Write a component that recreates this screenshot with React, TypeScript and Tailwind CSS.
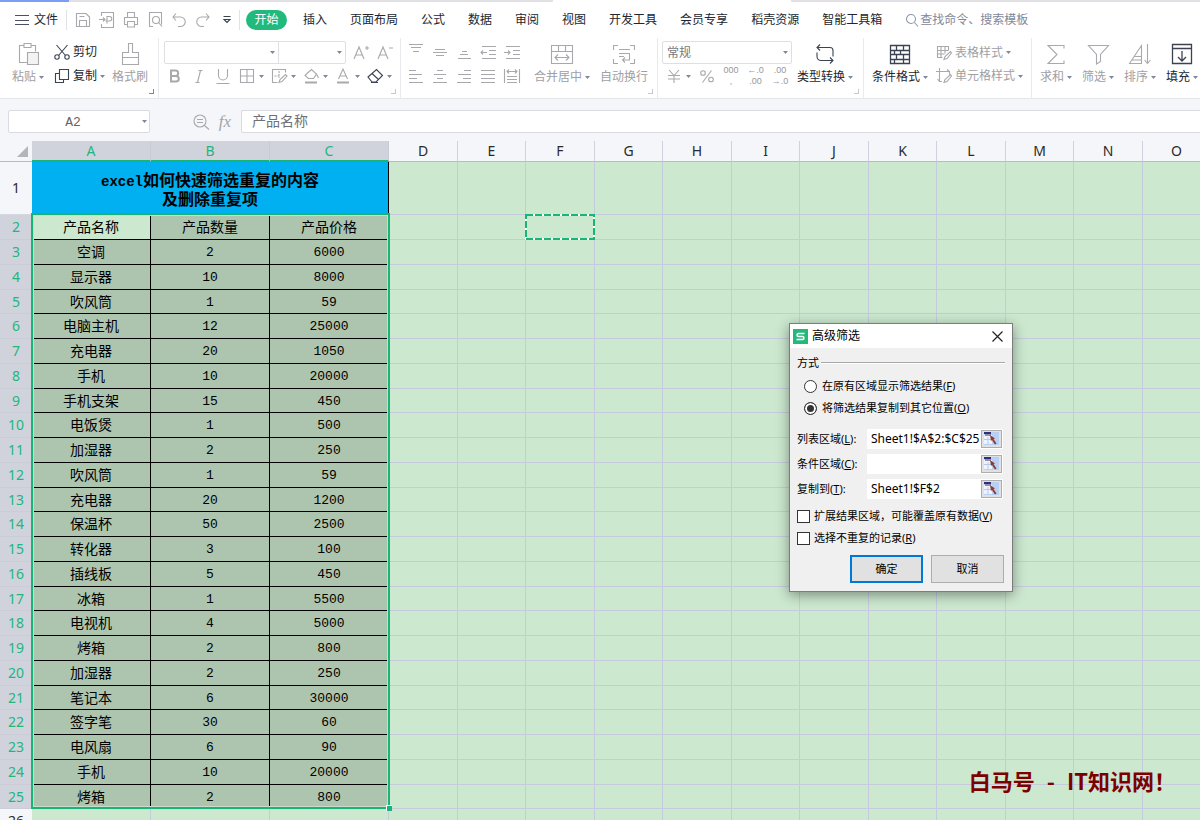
import React, { useState } from 'react'
import clsx from 'clsx'

type Product = [name: string, count: number, price: number]

const PRODUCTS: Product[] = [
  ['空调', 2, 6000],
  ['显示器', 10, 8000],
  ['吹风筒', 1, 59],
  ['电脑主机', 12, 25000],
  ['充电器', 20, 1050],
  ['手机', 10, 20000],
  ['手机支架', 15, 450],
  ['电饭煲', 1, 500],
  ['加湿器', 2, 250],
  ['吹风筒', 1, 59],
  ['充电器', 20, 1200],
  ['保温杯', 50, 2500],
  ['转化器', 3, 100],
  ['插线板', 5, 450],
  ['冰箱', 1, 5500],
  ['电视机', 4, 5000],
  ['烤箱', 2, 800],
  ['加湿器', 2, 250],
  ['笔记本', 6, 30000],
  ['签字笔', 30, 60],
  ['电风扇', 6, 90],
  ['手机', 10, 20000],
  ['烤箱', 2, 800],
]

const MENU = [
  '插入',
  '页面布局',
  '公式',
  '数据',
  '审阅',
  '视图',
  '开发工具',
  '会员专享',
  '稻壳资源',
  '智能工具箱',
]

const DATA_COLS = ['A', 'B', 'C']
const FREE_COLS = ['D', 'E', 'F', 'G', 'H', 'I', 'J', 'K', 'L', 'M', 'N', 'O']

// 图标外壳：统一描边
function Icon({
  size = 18,
  children,
  dark,
}: {
  size?: number
  children: React.ReactNode
  dark?: boolean
}) {
  return (
    <svg
      width={size}
      height={size}
      viewBox={`0 0 ${size} ${size}`}
      fill="none"
      strokeWidth="1.1"
      className={clsx('shrink-0', dark ? 'stroke-[#3b4252]' : 'stroke-[#a9a9ad]')}
      aria-hidden="true"
    >
      {children}
    </svg>
  )
}

function Caret() {
  return (
    <svg width="5" height="3" viewBox="0 0 5 3" className="shrink-0 fill-[#7d879d]" aria-hidden="true">
      <path d="M0 0h5L2.5 3z" />
    </svg>
  )
}

function Divider() {
  return <div className="w-px shrink-0 self-stretch bg-[#e9eaee]" />
}

// 分组右下角的展开标记
function Corner({ dark }: { dark?: boolean }) {
  return (
    <span
      className={clsx(
        'absolute right-1 bottom-1 size-[5px] border-r border-b',
        dark ? 'border-[#7d879d]' : 'border-[#c3c9d6]'
      )}
    />
  )
}

function BigButton({
  label,
  icon,
  caret,
  dark,
  className,
}: {
  label: string
  icon: React.ReactNode
  caret?: boolean
  dark?: boolean
  className: string
}) {
  return (
    <button className={clsx('flex shrink-0 flex-col items-center', className)}>
      <span className="flex h-[26px] items-center">{icon}</span>
      <span
        className={clsx(
          'flex h-5 items-center gap-[3px] whitespace-nowrap',
          dark ? 'text-[#22262e]' : 'text-[#a0a0a4]'
        )}
      >
        {label}
        {caret && <Caret />}
      </span>
    </button>
  )
}

function SmallButton({
  title,
  caret,
  children,
}: {
  title: string
  caret?: boolean
  children: React.ReactNode
}) {
  return (
    <button
      aria-label={title}
      className={clsx('flex h-6 shrink-0 items-center', caret ? 'w-8' : 'w-6')}
    >
      <span className="flex w-6 items-center justify-center">{children}</span>
      {caret && <Caret />}
    </button>
  )
}

function QuickAccess() {
  return (
    <div className="flex">
      <SmallButton title="保存">
        <Icon>
          <path d="M2.500 2.500h9.500l3.500 3.500v9.500h-13zM5.500 15.500v-6h7v6M5.500 5.500h5" />
        </Icon>
      </SmallButton>
      <SmallButton title="输出为PDF">
        <Icon>
          <path d="M3.500 5v-3.500h12v15h-12v-3.500M1 8.500h6M5 6.500l2 2-2 2M9 12.500v-7h2.500a2 2 0 0 1 0 4.500h-4" />
        </Icon>
      </SmallButton>
      <SmallButton title="打印">
        <Icon>
          <path d="M5.500 6v-4.500h7v4.500M5 13.500h-2.500v-7h13v7H13M5.500 10.500h7v5.500h-7z" />
        </Icon>
      </SmallButton>
      <SmallButton title="打印预览">
        <Icon>
          <path d="M7 15.500H3.500v-14h12v12" />
          <circle cx="10" cy="9" r="3.500" />
          <path d="M12.500 11.500l3.500 4" />
        </Icon>
      </SmallButton>
      <SmallButton title="撤销">
        <Icon>
          <path d="M6 2.500L3 6l3 3.500M3 6h7.500a4.500 4.500 0 0 1 0 9.500H8" />
        </Icon>
      </SmallButton>
      <SmallButton title="恢复">
        <Icon>
          <path d="M12 2.500L15 6l-3 3.500M15 6H7.500a4.500 4.500 0 0 0 0 9.500H10" />
        </Icon>
      </SmallButton>
      <SmallButton title="自定义快速访问">
        <Icon size={10} dark>
          <path d="M1.500 1.500h7M2 4.500h6l-3 3z" />
        </Icon>
      </SmallButton>
    </div>
  )
}

function MenuBar() {
  return (
    <nav className="flex h-9 shrink-0 items-center pl-[15px] whitespace-nowrap text-[#22262e]">
      <button className="flex w-[51px] items-center gap-[5px]">
        <svg width="14" height="10" className="stroke-[#4b5160]" aria-hidden="true">
          <path d="M0 .5h14M0 5.500h14M0 9.500h14" />
        </svg>
        文件
      </button>
      <div className="mr-1 h-5 w-px bg-[#e1e2e6]" />
      <QuickAccess />
      <div className="mr-[6px] h-5 w-px bg-[#e1e2e6]" />
      <button className="mr-4 h-5 w-[41px] rounded-full bg-[#22b97d] text-white">开始</button>
      <div className="flex gap-[23px]">
        {MENU.map(item => (
          <button key={item}>{item}</button>
        ))}
      </div>
      <label className="ml-[23px] flex items-center gap-px">
        <Icon size={14}>
          <circle cx="6" cy="6" r="4.500" className="stroke-[#8c96ab]" />
          <path d="M9.500 9.500l3.500 4" className="stroke-[#8c96ab]" />
        </Icon>
        <input
          className="w-28 bg-transparent outline-none placeholder:text-[#7f889b]"
          placeholder="查找命令、搜索模板"
        />
      </label>
    </nav>
  )
}

function ClipboardGroup() {
  return (
    <div className="relative flex shrink-0 pt-[3px] pr-2 pl-[11px]">
      <BigButton
        className="w-[34px]"
        label="粘贴"
        caret
        icon={
          <Icon size={24}>
            <path d="M8 3.500H3.500v17H11M15 3.500h4.500v6M8 1.500h7v4H8z" />
            <path d="M11.500 10.500h11v12h-11z" className="fill-[#f3f3f4]" />
          </Icon>
        }
      />
      <div className="ml-[9px] flex w-14 flex-col text-[#22262e]">
        <button className="flex h-[22px] items-center gap-[3px]">
          <Icon size={16} dark>
            <path d="M2.500 1l9 10.500M13.500 1l-9 10.500" />
            <circle cx="3" cy="13" r="2.200" />
            <circle cx="13" cy="13" r="2.200" />
          </Icon>
          剪切
        </button>
        <button className="mt-px flex h-6 items-center gap-[3px]">
          <Icon size={16} dark>
            <path d="M5.500 1.500h9v10h-9zM5.500 5.500h-4v9h8v-3" />
          </Icon>
          复制
          <Caret />
        </button>
      </div>
      <BigButton
        className="w-10"
        label="格式刷"
        icon={
          <Icon size={24}>
            <path d="M10.500 1.500h4v9h6v12h-16v-12h6zM4.500 15.500h16" />
          </Icon>
        }
      />
      <Corner dark />
    </div>
  )
}

function FontGroup() {
  return (
    <div className="relative flex shrink-0 flex-col pt-[3px] pr-[3px] pl-1">
      <div className="flex h-[23px] items-center pl-px">
        <div className="mr-[3px] flex h-[23px] w-[182px] rounded-xs border border-[#dedfe3]">
          <div className="relative flex-1 border-r border-[#dedfe3]">
            <select aria-label="字体" className="size-full appearance-none outline-none" defaultValue="">
              <option value="" />
              <option value="simsun">宋体</option>
            </select>
            <span className="pointer-events-none absolute top-[9px] right-[3px] leading-[0]">
              <Caret />
            </span>
          </div>
          <div className="relative w-[66px]">
            <select aria-label="字号" className="size-full appearance-none outline-none" defaultValue="">
              <option value="" />
              <option value="11">11</option>
            </select>
            <span className="pointer-events-none absolute top-[9px] right-[3px] leading-[0]">
              <Caret />
            </span>
          </div>
        </div>
        <SmallButton title="增大字号">
          <Icon>
            <path d="M2 15L7 3l5 12M3.800 11h6.400M13 4h4M15 2v4" />
          </Icon>
        </SmallButton>
        <SmallButton title="减小字号">
          <Icon>
            <path d="M2 15L7 3l5 12M3.800 11h6.400M13 4h4" />
          </Icon>
        </SmallButton>
      </div>
      <div className="flex">
        <SmallButton title="加粗">
          <Icon>
            <path
              d="M5 3.500h4.500a2.700 2.700 0 0 1 0 5.400H5zM5 8.900h5a2.800 2.800 0 0 1 0 5.600H5z"
              strokeWidth="2"
            />
          </Icon>
        </SmallButton>
        <SmallButton title="倾斜">
          <Icon>
            <path d="M8.500 3.500h4M5.500 15.500h4M10.500 3.500l-3 12" />
          </Icon>
        </SmallButton>
        <SmallButton title="下划线">
          <Icon>
            <path d="M4.500 2v6.500a4.500 4.500 0 0 0 9 0V2M2.500 16.500h13" />
          </Icon>
        </SmallButton>
        <SmallButton title="边框" caret>
          <Icon>
            <path d="M2.500 2.500h13v13h-13zM9 2.500v13M2.500 9h13" />
          </Icon>
        </SmallButton>
        <SmallButton title="绘制边框" caret>
          <Icon>
            <path d="M15.500 5.500v-3h-13v13h5" />
            <path d="M9 4v7M4.500 9h6" strokeDasharray="2 1" />
            <path d="M9 15.500l1-3 5.500-5 1.500 1.500-5 5.500z" />
          </Icon>
        </SmallButton>
        <SmallButton title="填充颜色" caret>
          <Icon>
            <path d="M5 6.500l4.500-4 5 4.500-3 4.500H6.500L3 8.500zM14.500 7l2 4" />
            <path d="M3 15.500h12" strokeWidth="2" />
          </Icon>
        </SmallButton>
        <SmallButton title="字体颜色" caret>
          <Icon>
            <path d="M4.500 12L9 2l4.500 10M6 9h6" />
            <path d="M3 15.500h12" strokeWidth="2" />
          </Icon>
        </SmallButton>
        <SmallButton title="清除" caret>
          <Icon dark>
            <path d="M2 10l8.500-7.500 6 6-6.500 6.500H6zM6 6.500l6.500 6M5 15.500h7" />
          </Icon>
        </SmallButton>
      </div>
      <Corner />
    </div>
  )
}

const ALIGN_TOP: [string, string][] = [
  ['顶端对齐', 'M2 1.500h14M4 4.500h10M6 8.500h6'],
  ['垂直居中', 'M4 6.500h10M2 9.500h14M5 12.500h8'],
  ['底端对齐', 'M7 8.500h5M5 11.500h8M3 15.500h13'],
  ['减少缩进', 'M3 3.500h14M10 7.500h7M10 11.500h7M3 15.500h14M2 9.500h6M4 7.500l-2 2 2 2'],
  ['增加缩进', 'M3 3.500h14M10 7.500h7M10 11.500h7M3 15.500h14M1 9.500h6M5 7.500l2 2-2 2'],
]

const ALIGN_BOTTOM: [string, string][] = [
  ['左对齐', 'M2 3.500h7M2 7.500h13M2 11.500h8M2 15.500h14'],
  ['居中对齐', 'M6 3.500h6M3 7.500h12M6 11.500h6M2 15.500h14'],
  ['右对齐', 'M9 3.500h7M3 7.500h13M8 11.500h8M2 15.500h14'],
  ['两端对齐', 'M2 3.500h14M2 7.500h14M2 11.500h14M2 15.500h14'],
  ['分散对齐', 'M1.500 2v14M16.500 2v14M4 4.500h10M6 2.500l-2 2 2 2M12 2.500l2 2-2 2M4 9.500h10M4 12.500h10M4 15.500h10'],
]

function AlignGroup() {
  return (
    <div className="relative flex shrink-0 pt-[3px] pr-[3px] pl-[3px]">
      <div className="-mt-px mr-[6px] flex flex-col">
        {[ALIGN_TOP, ALIGN_BOTTOM].map((row, i) => (
          <div key={i} className="flex">
            {row.map(([title, d]) => (
              <SmallButton key={title} title={title}>
                <Icon>
                  <path d={d} />
                </Icon>
              </SmallButton>
            ))}
          </div>
        ))}
      </div>
      <BigButton
        className="w-16"
        label="合并居中"
        caret
        icon={
          <Icon size={24}>
            <path d="M1.500 3.500h21v18h-21zM1.500 9.500h21M8.500 3.500v6M15.500 3.500v6M5 15.500h14M8 12.500l-3 3 3 3M16 12.500l3 3-3 3" />
          </Icon>
        }
      />
      <BigButton
        className="w-[60px]"
        label="自动换行"
        icon={
          <Icon size={24}>
            <path d="M6 3.500H1.500V8M18 3.500h4.500V8M1.500 17v4.500H6M22.500 17v4.500H18M7 7.500h11M7 11.500h11M7 14.500h5M17.500 11.500v6.500h-7M13 15.500l-2.500 2.500 2.500 2.500" />
          </Icon>
        }
      />
      <Corner />
    </div>
  )
}

// 数字格式类图标里的小字
function Glyph({ top, bottom }: { top: string; bottom: string }) {
  return (
    <span className="flex flex-col text-center font-['Liberation_Sans','Noto_Sans_CJK_SC',sans-serif] text-[9px] leading-[11px] text-[#97979b]">
      <span>{top}</span>
      <span>{bottom}</span>
    </span>
  )
}

function NumberGroup() {
  return (
    <div className="relative flex shrink-0 pt-[3px] pr-2 pl-1">
      <div className="w-[130px]">
        <div className="relative h-[23px] rounded-xs border border-[#dedfe3]">
          <select
            aria-label="数字格式"
            className="size-full appearance-none pl-1 text-[#77777b] outline-none"
            defaultValue="常规"
          >
            <option>常规</option>
            <option>数值</option>
          </select>
          <span className="pointer-events-none absolute top-[9px] right-[3px] leading-[0]">
            <Caret />
          </span>
        </div>
        <div className="flex justify-between">
          <SmallButton title="货币" caret>
            <Icon>
              <path d="M4 3l5 5.500L14 3M9 8.500V16M3 8.500h12M3 12h12" />
            </Icon>
          </SmallButton>
          <SmallButton title="百分比">
            <Icon>
              <circle cx="5" cy="6" r="2.300" />
              <circle cx="13" cy="12.500" r="2.300" />
              <path d="M13.500 3.500l-9 12" />
            </Icon>
          </SmallButton>
          <SmallButton title="千位分隔">
            <Glyph top="000" bottom="," />
          </SmallButton>
          <SmallButton title="增加小数位">
            <Glyph top="←.0" bottom=".00" />
          </SmallButton>
          <SmallButton title="减少小数位">
            <Glyph top=".00" bottom="→.0" />
          </SmallButton>
        </div>
      </div>
      <BigButton
        className="ml-[3px] w-[60px]"
        label="类型转换"
        caret
        dark
        icon={
          <Icon size={24} dark>
            <path d="M7 2.500l-3 3 3 3M4 5.500h13a3 3 0 0 1 3 3v6M17 15.500l3 3-3 3M20 18.500H8a4 4 0 0 1-4-4v-4" />
          </Icon>
        }
      />
      <Corner />
    </div>
  )
}

function StyleGroup() {
  return (
    <div className="relative flex shrink-0 pt-[3px] pr-[7px] pl-2">
      <BigButton
        className="w-14"
        label="条件格式"
        caret
        dark
        icon={
          <Icon size={24} dark>
            <path
              d="M2.500 3.500h19v18h-19zM2.500 8.500h19M2.500 12.500h19M2.500 17.500h19M8.500 3.500v5M15.500 3.500v5M6.500 8.500v4M12.500 8.500v4M8.500 12.500v5M15.500 12.500v9M6.500 17.500v4"
              strokeWidth="1.300"
            />
          </Icon>
        }
      />
      <div className="ml-2 flex w-[88px] flex-col whitespace-nowrap text-[#a0a0a4]">
        <button className="flex h-[23px] items-center gap-[3px]">
          <Icon size={16}>
            <path d="M12.500 5.500v-4h-11v11h5M1.500 5.500h11M1.500 9h7M5 1.500v11M9 1.500v7M8 14.500l1-3 5.500-5 1 1.500-4.500 5.500z" />
          </Icon>
          表格样式
          <Caret />
        </button>
        <button className="flex h-6 items-center gap-[3px]">
          <Icon size={16}>
            <path d="M3.500 0v13.500H6M0 3.500h13.500v3M11 1.500l2.500 2M1.500 11l2 2.500M8 14.500l1-3 5.500-5 1 1.500-4.500 5.500z" />
          </Icon>
          单元格样式
          <Caret />
        </button>
      </div>
    </div>
  )
}

function EditGroup() {
  return (
    <div className="flex shrink-0 pt-[3px] pl-[3px]">
      <BigButton
        className="w-[42px]"
        label="求和"
        caret
        icon={
          <Icon size={24}>
            <path d="M20 6.500v-3H4l9 9-9 9h16v-3" />
          </Icon>
        }
      />
      <BigButton
        className="w-[42px]"
        label="筛选"
        caret
        icon={
          <Icon size={24}>
            <path d="M2.500 3.500h20l-8 9v7l-4 2.500v-9.500z" />
          </Icon>
        }
      />
      <BigButton
        className="w-[42px]"
        label="排序"
        caret
        icon={
          <Icon size={24}>
            <path d="M1.500 21.500L13.500 3.500v18zM6 14.500h7.500M4 18h9.500M19.500 2v19M16.500 18l3 3.500 3-3.500" />
          </Icon>
        }
      />
      <BigButton
        className="w-[42px]"
        label="填充"
        caret
        dark
        icon={
          <Icon size={24} dark>
            <path d="M2.500 2.500h19v19h-19zM2.500 6.500h19M12 9v10M8 15l4 4 4-4" strokeWidth="1.300" />
          </Icon>
        }
      />
    </div>
  )
}

function FormulaBar() {
  return (
    <div className="flex h-[42px] shrink-0 items-start bg-[#f5f6f9] pt-[11px] pl-2">
      <div className="relative">
        <input
          aria-label="名称框"
          className="block h-[23px] w-[142px] rounded-xs border border-[#d9dbe1] bg-white pt-[2px] pr-3 text-center font-['Liberation_Mono','Noto_Sans_CJK_SC',monospace] text-[13px] text-[#66666a] outline-none"
          defaultValue="A2"
        />
        <span className="pointer-events-none absolute top-[10px] right-[3px] leading-[0]">
          <Caret />
        </span>
      </div>
      <div className="ml-[39px] flex h-6 items-center">
        <SmallButton title="浏览公式">
          <Icon>
            <circle cx="8" cy="8" r="6" />
            <path d="M12.500 12.500l4.500 4M5 6.500h6M5 9.500h6" />
          </Icon>
        </SmallButton>
        <button
          aria-label="插入函数"
          className="w-6 text-center font-['Liberation_Serif',serif] text-[17px] text-[#a4a4a8] italic"
        >
          fx
        </button>
      </div>
      <input
        aria-label="编辑栏"
        className="ml-1 h-[23px] flex-1 rounded-l-xs border border-r-0 border-[#d9dbe1] bg-white pb-1 pl-[10px] text-sm text-[#707074] outline-none"
        defaultValue="产品名称"
      />
    </div>
  )
}

function FreeCells({ row }: { row: number }) {
  return (
    <>
      {FREE_COLS.map(col => (
        <td key={col} className="relative border-r border-b border-[#c5cbdc] p-0">
          {/* F2 上的复制虚线框 */}
          {row === 2 && col === 'F' && (
            <svg
              width="70"
              height="26"
              className="absolute -top-px -left-px fill-none"
              strokeWidth="2"
              aria-hidden="true"
            >
              <rect x="1" y="1" width="68" height="24" className="stroke-white" />
              <rect
                x="1"
                y="1"
                width="68"
                height="24"
                strokeDasharray="7 2"
                className="stroke-[#18b478]"
              />
            </svg>
          )}
        </td>
      ))}
    </>
  )
}

function RowHead({ n, selected }: { n: number; selected?: boolean }) {
  return (
    <th
      scope="row"
      className={clsx(
        'border-b p-0 text-center text-sm leading-5 font-normal',
        selected
          ? 'border-[#cacdd7] bg-[#d0d3dc] text-[#22b67c]'
          : 'border-[#d5d8e0] bg-[#f5f6f9] text-[#2a2a2a]'
      )}
    >
      {n}
    </th>
  )
}

function Sheet() {
  const rows: (string | number)[][] = [['产品名称', '产品数量', '产品价格'], ...PRODUCTS]

  return (
    <div className="relative min-h-0 flex-1 overflow-hidden bg-[#cce8cf]">
      <table className="w-[1211px] table-fixed border-separate border-spacing-0 leading-5 text-black">
        <colgroup>
          <col className="w-8" />
          {DATA_COLS.map(c => (
            <col key={c} className="w-[119px]" />
          ))}
          {FREE_COLS.map((c, i) => (
            <col key={c} className={i % 2 ? 'w-[68px]' : 'w-[69px]'} />
          ))}
        </colgroup>
        <thead>
          <tr className="h-[21px] text-sm">
            <td className="border-b border-[#b4bbcf] bg-[#f5f6f9] p-0">
              <svg width="11" height="11" className="ml-[17px] fill-[#b5b5b7]" aria-hidden="true">
                <path d="M11 0v11H0z" />
              </svg>
            </td>
            {DATA_COLS.map(c => (
              <th
                key={c}
                scope="col"
                className="border-r border-b-2 border-r-[#c8cbd5] border-b-[#18b478] bg-[#d0d3dc] p-0 leading-[18px] font-normal text-[#22b67c]"
              >
                {c}
              </th>
            ))}
            {FREE_COLS.map(c => (
              <th
                key={c}
                scope="col"
                className="border-r border-b border-r-[#cdd2de] border-b-[#b4bbcf] bg-[#f5f6f9] p-0 leading-[18px] font-normal text-[#2a2a2a]"
              >
                {c}
              </th>
            ))}
          </tr>
        </thead>
        <tbody>
          <tr className="h-[53px]">
            <RowHead n={1} />
            <td
              colSpan={3}
              className="border-r border-black bg-[#00b0f0] p-0 pt-1 text-center font-['Liberation_Mono','Noto_Sans_CJK_SC',monospace] text-base leading-[18px] font-bold"
            >
              <span className="text-sm">excel</span>如何快速筛选重复的内容
              <br />
              及删除重复项
            </td>
            <FreeCells row={1} />
          </tr>
          {rows.map((row, i) => (
            <tr key={i} className={i % 4 === 3 ? 'h-6' : 'h-[25px]'}>
              <RowHead n={i + 2} selected />
              {row.map((cell, j) => (
                <td
                  key={j}
                  className={clsx(
                    'border-r border-b border-black p-0 text-center leading-5',
                    i === 0 && j === 0 ? 'bg-[#cce8cf]' : 'bg-[#adc5af]',
                    typeof cell === 'number'
                      ? "pt-[2px] font-['Liberation_Mono','Noto_Sans_CJK_SC',monospace] text-[13px]"
                      : "pb-[2px] font-['Noto_Sans_CJK_SC',sans-serif] text-sm"
                  )}
                >
                  {cell}
                </td>
              ))}
              <FreeCells row={i + 2} />
            </tr>
          ))}
          <tr className="h-[25px]">
            <RowHead n={26} />
            {DATA_COLS.map(c => (
              <td key={c} className="border-r border-b border-[#c5cbdc] p-0" />
            ))}
            <FreeCells row={26} />
          </tr>
        </tbody>
      </table>

      {/* 选区边框与填充柄 */}
      <div className="pointer-events-none absolute top-[72px] left-[31px] h-[596px] w-[359px] border-2 border-[#18b478] shadow-[inset_0_0_0_1px_#c9dccb]">
        <span className="absolute -right-1 -bottom-1 size-[6px] border-t border-l border-white bg-[#18b478]" />
      </div>

      <p className="absolute right-6 bottom-[26px] flex gap-3 font-['Noto_Sans_CJK_SC',sans-serif] text-[22px] leading-7 font-bold text-[#7d0000]">
        <span>白马号</span>
        <span>-</span>
        <span>IT知识网！</span>
      </p>
    </div>
  )
}

function RangeField({
  id,
  label,
  hotkey,
  value,
}: {
  id: string
  label: string
  hotkey: string
  value: string
}) {
  return (
    <div className="flex h-[25px] items-center">
      <label htmlFor={id} className="w-[70px]">
        {label}(<u>{hotkey}</u>):
      </label>
      <div className="flex h-5 flex-1 items-center bg-white pr-px">
        <input
          id={id}
          defaultValue={value}
          className="w-full min-w-0 flex-1 bg-transparent pl-1 text-xs outline-none"
        />
        <button
          aria-label={`选择${label}`}
          className="flex h-[18px] w-[21px] shrink-0 items-center justify-center border border-[#adadad] bg-[#e1e1e1]"
        >
          <svg width="15" height="13" viewBox="0 0 15 13" aria-hidden="true">
            <path d="M0 0h15v13H0z" fill="#b9d0f4" />
            <path d="M0 3h8v9H0z" fill="#eef4ff" />
            <path d="M0 0h7v2H0z" fill="#2b2f7d" />
            <path d="M1 2h6v2H1z" fill="#8d93a5" />
            <path d="M0 7.500h8M4 5v7" stroke="#b4c8ea" />
            <path d="M6 3l5 3.500-1.500.5 3 4.500-1.500 1-3-4.500L7 9z" fill="#8b3a2f" />
          </svg>
        </button>
      </div>
    </div>
  )
}

function FilterDialog() {
  const [mode, setMode] = useState<'inplace' | 'copy'>('copy')
  const radio =
    'mr-[5px] size-[13px] appearance-none rounded-full border border-[#333] bg-white checked:bg-[#333] checked:shadow-[inset_0_0_0_2px_#fff]'
  const check = 'mr-1 size-[13px] appearance-none border border-[#333] bg-white checked:bg-[#333]'

  return (
    <div
      role="dialog"
      aria-label="高级筛选"
      className="absolute top-[323px] left-[789px] w-[224px] border border-[#7a7d7a] bg-[#f0f0f0] text-[11px] leading-4 whitespace-nowrap text-black shadow-[0_3px_12px_rgba(0,0,0,0.4)]"
    >
      <div className="flex h-6 items-center bg-white pr-[9px] pl-[3px]">
        <svg width="15" height="15" viewBox="0 0 15 15" fill="none" aria-hidden="true">
          <path d="M0 0h15v15H0z" fill="#25b87b" />
          <path d="M11.500 4.500h-6a1.500 1.500 0 0 0 0 3h4a1.500 1.500 0 0 1 0 3h-6" stroke="#fff" strokeWidth="1.400" />
        </svg>
        <h2 className="ml-1 flex-1 text-xs">高级筛选</h2>
        <button aria-label="关闭">
          <svg width="11" height="11" stroke="#222" strokeWidth="1.200" aria-hidden="true">
            <path d="M.5.5l10 10M10.500.5l-10 10" />
          </svg>
        </button>
      </div>

      <div className="px-[7px] pt-[7px] pb-2">
        <div className="flex h-4 items-center gap-[2px]">
          方式
          <div className="h-[2px] flex-1 border-t border-b border-t-[#a9a9a9] border-b-white" />
        </div>
        <div className="mt-1 pl-[7px]">
          <label className="flex h-[22px] items-center">
            <input
              type="radio"
              name="mode"
              className={radio}
              checked={mode === 'inplace'}
              onChange={() => setMode('inplace')}
            />
            在原有区域显示筛选结果(<u>F</u>)
          </label>
          <label className="flex h-[22px] items-center">
            <input
              type="radio"
              name="mode"
              className={radio}
              checked={mode === 'copy'}
              onChange={() => setMode('copy')}
            />
            将筛选结果复制到其它位置(<u>O</u>)
          </label>
        </div>
        <div className="mt-[7px] pr-[2px]">
          <RangeField id="list" label="列表区域" hotkey="L" value="Sheet1!$A$2:$C$25" />
          <RangeField id="criteria" label="条件区域" hotkey="C" value="" />
          <RangeField id="target" label="复制到" hotkey="T" value="Sheet1!$F$2" />
        </div>
        <div className="mt-1">
          <label className="flex h-[22px] items-center">
            <input type="checkbox" className={check} />
            扩展结果区域，可能覆盖原有数据(<u>V</u>)
          </label>
          <label className="flex h-[22px] items-center">
            <input type="checkbox" className={check} />
            选择不重复的记录(<u>R</u>)
          </label>
        </div>
        <div className="mt-[6px] flex justify-end gap-2 pr-px">
          <button className="h-7 w-[73px] border-2 border-[#0078d7] bg-[#e1e1e1]">确定</button>
          <button className="h-7 w-[73px] border border-[#adadad] bg-[#e1e1e1]">取消</button>
        </div>
      </div>
    </div>
  )
}

export default function App() {
  return (
    <div className="relative flex h-screen flex-col overflow-hidden bg-white font-['Noto_Sans','Noto_Sans_CJK_SC',sans-serif] text-xs">
      <div className="flex h-[2px] shrink-0 bg-[#e0e0e5]">
        <div className="w-[69px] bg-[#7c9df5]" />
        <div className="ml-[484px] w-[238px] bg-white" />
      </div>
      <MenuBar />
      <div className="flex h-[61px] shrink-0 border-b border-[#e3e5ea]">
        <ClipboardGroup />
        <Divider />
        <FontGroup />
        <Divider />
        <AlignGroup />
        <Divider />
        <NumberGroup />
        <Divider />
        <StyleGroup />
        <Divider />
        <EditGroup />
      </div>
      <FormulaBar />
      <Sheet />
      <FilterDialog />
    </div>
  )
}
